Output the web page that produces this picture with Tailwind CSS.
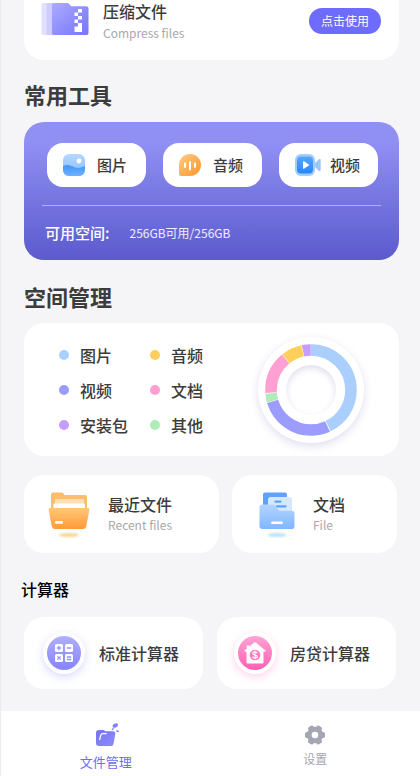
<!DOCTYPE html>
<html lang="zh-CN">

<head>
    <meta charset="UTF-8">
    <meta name="viewport" content="width=device-width, initial-scale=1.0">
    <title>文件管理</title>
    <script src="https://cdn.jsdelivr.net/npm/@tailwindcss/browser@4"></script>
</head>

<body class="bg-[#f5f5f8] font-['Noto_Sans_CJK_SC',sans-serif] text-[#3c3c3c] min-h-screen flex flex-col border-l border-[#ececef]">
    <main class="flex-1 pl-[23px] pr-[21px] pb-[22px]">
        <!-- 压缩文件 -->
        <section class="bg-white rounded-b-[20px] flex items-start pl-[17px] pr-[18px] pb-4">
            <svg class="mt-[2px] w-12 h-[34px]" viewBox="0 0 48 34" fill="none">
                <defs>
                    <linearGradient id="zip" x1="0" y1="0" x2="1" y2="1">
                        <stop stop-color="#abaaff" />
                        <stop offset="1" stop-color="#7675fa" />
                    </linearGradient>
                </defs>
                <path d="M2 1h13v32H2a1.500 1.500 0 0 1-1.500-1.500v-29A1.500 1.500 0 0 1 2 1z" fill="#e2e0ff" />
                <path d="M7 1h14v32H7a1.500 1.500 0 0 1-1.500-1.500v-29A1.500 1.500 0 0 1 7 1z" fill="#cfccff" />
                <path d="M13 1h13c1 0 1.600.3 2.200 1l2 2.300H45a2.500 2.500 0 0 1 2.500 2.500V31a2 2 0 0 1-2 2H13a2 2 0 0 1-2-2V3a2 2 0 0 1 2-2z" fill="url(#zip)" />
                <path d="M37 7h4v3.500h-4zM33.500 10.500H37V14h-3.500zM37 14h4v3.500h-4zM33.500 17.500H37V21h-3.500zM37 21h4v9h-7.500v-5.500H37z" fill="#fff" />
            </svg>
            <div class="ml-[14px] flex-1">
                <h3 class="text-base leading-[22px] font-medium">压缩文件</h3>
                <p class="text-xs leading-[22px] text-[#a8a8a8]">Compress files</p>
            </div>
            <button class="mt-2 h-[26px] px-3 rounded-full bg-[#6d6cff] text-white text-xs">点击使用</button>
        </section>

        <!-- 常用工具 -->
        <h2 class="mt-5 mb-[14px] text-[22px] leading-7 font-bold">常用工具</h2>
        <section class="rounded-[20px] bg-linear-to-b from-[#908ff4] from-15% to-[#5c5acd] px-[18px] pt-[21px]">
            <div class="flex justify-between pl-[5px] pr-[3px]">
                <button class="w-[99px] h-11 rounded-2xl bg-white flex items-center pl-4 gap-3">
                    <svg class="w-[22px] h-[22px]" viewBox="0 0 22 22">
                        <defs>
                            <linearGradient id="sky" x1="0" y1="0" x2="0" y2="1">
                                <stop stop-color="#b5d8ff" />
                                <stop offset="1" stop-color="#84bcff" />
                            </linearGradient>
                            <linearGradient id="sea" x1="0" y1="0" x2="0" y2="1">
                                <stop stop-color="#3f95ff" />
                                <stop offset="1" stop-color="#70b2ff" />
                            </linearGradient>
                        </defs>
                        <rect width="22" height="22" rx="6" fill="url(#sky)" />
                        <path d="M0 12c4-2 7-1 10 .5s7 2 12-.5v4a6 6 0 0 1-6 6H6a6 6 0 0 1-6-6z" fill="url(#sea)" />
                        <circle cx="16" cy="7" r="2.400" fill="#fff" />
                    </svg>
                    <span class="text-[15px] font-medium">图片</span>
                </button>
                <button class="w-[99px] h-11 rounded-2xl bg-white flex items-center pl-4 gap-3">
                    <svg class="w-[22px] h-[22px]" viewBox="0 0 22 22">
                        <defs>
                            <linearGradient id="aud" x1="0" y1="0" x2="1" y2="1">
                                <stop stop-color="#ffcb86" />
                                <stop offset="1" stop-color="#ff9527" />
                            </linearGradient>
                        </defs>
                        <path d="M11 0a11 11 0 0 1 0 22H2a2 2 0 0 1-2-2v-9A11 11 0 0 1 11 0z" fill="url(#aud)" />
                        <path d="M6 9.500v3.500M11 8v7.500M16 9.500v3.500" stroke="#fff" stroke-width="2" stroke-linecap="round" />
                    </svg>
                    <span class="text-[15px] font-medium">音频</span>
                </button>
                <button class="w-[99px] h-11 rounded-2xl bg-white flex items-center pl-4 gap-[9px]">
                    <svg class="w-[26px] h-[22px]" viewBox="0 0 26 22">
                        <defs>
                            <linearGradient id="cam" x1="0" y1="0" x2="0" y2="1">
                                <stop stop-color="#58a7ff" />
                                <stop offset="1" stop-color="#2685ff" />
                            </linearGradient>
                        </defs>
                        <path d="M20 9l3.700-3.500c.8-.8 2-.4 2 .6v10c0 1-1.200 1.400-2 .6L20 13z" fill="#98c8ff" />
                        <rect width="20" height="22" rx="6" fill="#a2ceff" />
                        <rect x="2" y="2.500" width="16" height="17" rx="4" fill="url(#cam)" />
                        <path d="M8 7.800c0-.6.5-.8 1-.5l4.800 3.100c.5.300.5.900 0 1.200L9 14.700c-.5.300-1 .1-1-.5z" fill="#fff" />
                    </svg>
                    <span class="text-[15px] font-medium">视频</span>
                </button>
            </div>
            <div class="mt-[18px] border-t border-white/45 h-[55px] flex items-center pl-[3px] gap-5 text-white">
                <span class="text-[15px] font-medium">可用空间:</span>
                <span class="text-xs text-white/90">256GB可用/256GB</span>
            </div>
        </section>

        <!-- 空间管理 -->
        <h2 class="mt-[22px] mb-[13px] text-[22px] leading-7 font-bold">空间管理</h2>
        <section class="bg-white rounded-[20px] pt-[14px] pb-[13px] px-[35px] flex items-center justify-between">
            <ul class="grid grid-cols-[91px_auto] auto-rows-[35px] items-center text-base font-medium">
                <li class="flex items-center gap-[11px]"><i class="size-[10px] rounded-full bg-[#a9d1ff]"></i>图片</li>
                <li class="flex items-center gap-[11px]"><i class="size-[10px] rounded-full bg-[#ffcf5c]"></i>音频</li>
                <li class="flex items-center gap-[11px]"><i class="size-[10px] rounded-full bg-[#9c9cff]"></i>视频</li>
                <li class="flex items-center gap-[11px]"><i class="size-[10px] rounded-full bg-[#ff9fd2]"></i>文档</li>
                <li class="flex items-center gap-[11px]"><i class="size-[10px] rounded-full bg-[#c59cff]"></i>安装包</li>
                <li class="flex items-center gap-[11px]"><i class="size-[10px] rounded-full bg-[#aeecb9]"></i>其他</li>
            </ul>
            <div class="relative size-[106px] rounded-full bg-white shadow-[0_3px_8px_rgba(90,90,170,0.2)] grid place-items-center">
                <svg class="size-[92px]" viewBox="0 0 92 92">
                    <g fill="none" stroke-width="11.600" transform="rotate(-90 46 46)">
                        <circle cx="46" cy="46" r="40" stroke="#abcffc" pathLength="100" stroke-dasharray="42.900 57.100" />
                        <circle cx="46" cy="46" r="40" stroke="#9c9cff" pathLength="100" stroke-dasharray="27.200 72.800" stroke-dashoffset="-43.200" />
                        <circle cx="46" cy="46" r="40" stroke="#aeecb9" pathLength="100" stroke-dasharray="3.100 96.900" stroke-dashoffset="-70.600" />
                        <circle cx="46" cy="46" r="40" stroke="#ff9fd2" pathLength="100" stroke-dasharray="15.200 84.800" stroke-dashoffset="-73.900" />
                        <circle cx="46" cy="46" r="40" stroke="#ffcf5c" pathLength="100" stroke-dasharray="7.300 92.700" stroke-dashoffset="-89.300" />
                        <circle cx="46" cy="46" r="40" stroke="#c59cff" pathLength="100" stroke-dasharray="3.100 96.900" stroke-dashoffset="-96.800" />
                    </g>
                </svg>
                <div class="absolute inset-7 rounded-full shadow-[inset_0_3px_6px_rgba(90,90,170,0.2)]"></div>
            </div>
        </section>

        <section class="mt-[19px] grid grid-cols-[195fr_165fr] gap-[13px] pr-[2px]">
            <a href="#" class="h-[78px] bg-white rounded-[20px] flex items-center pl-6">
                <svg class="w-[42px] h-12" viewBox="0 0 42 48">
                    <defs>
                        <linearGradient id="fold" x1="0" y1="0" x2="0" y2="1">
                            <stop stop-color="#ffc878" />
                            <stop offset="1" stop-color="#ff9a35" />
                        </linearGradient>
                        <filter id="soft" x="-30%" y="-80%" width="160%" height="260%">
                            <feGaussianBlur stdDeviation="1" />
                        </filter>
                    </defs>
                    <ellipse cx="21" cy="45" rx="10" ry="2" fill="#ffd58c" filter="url(#soft)" />
                    <path d="M5 2.500h8.500c1 0 1.600.4 2 1.100L16.500 5H37a2 2 0 0 1 2 2v14H3V4.500a2 2 0 0 1 2-2z" fill="#ffbd6c" />
                    <rect x="7" y="9" width="29" height="10" rx="1" fill="#ffdfb4" />
                    <rect x="5.500" y="13.500" width="31.500" height="8" rx="1" fill="#fff" />
                    <path d="M2 18h38c1 0 1.600.8 1.400 1.700L38.300 36c-.4 2-1.600 3-3.300 3H7c-1.700 0-2.900-1-3.300-3L.6 19.700C.4 18.800 1 18 2 18z" fill="url(#fold)" />
                    <rect x="7" y="31" width="8" height="2.800" rx="1.200" fill="#fff" />
                </svg>
                <div class="ml-[18px]">
                    <h3 class="text-base leading-[22px] font-medium">最近文件</h3>
                    <p class="text-xs leading-5 text-[#a8a8a8]">Recent files</p>
                </div>
            </a>
            <a href="#" class="h-[78px] bg-white rounded-[20px] flex items-center pl-[27px]">
                <svg class="w-9 h-12" viewBox="0 0 36 48">
                    <defs>
                        <linearGradient id="doc" x1="0" y1="0" x2="0" y2="1">
                            <stop stop-color="#b3d4ff" />
                            <stop offset="1" stop-color="#80b7ff" />
                        </linearGradient>
                    </defs>
                    <ellipse cx="18" cy="45" rx="9.500" ry="2" fill="#bfe0ff" filter="url(#soft)" />
                    <path d="M6 2.500h20a2 2 0 0 1 2 2V19H4V4.500a2 2 0 0 1 2-2z" fill="#5fa2fb" />
                    <rect x="9" y="7" width="24" height="22" rx="2.500" fill="#d6e8ff" />
                    <path d="M16.500 11.700h5M18 16.400h8.500" stroke="#5fa2fb" stroke-width="2.200" stroke-linecap="round" />
                    <path d="M3 14.500h11c1.300 0 2 .5 2.700 1.500l2 3c.8 1.200 1.600 1.700 3 1.700H33a2.500 2.500 0 0 1 2.500 2.500v13A3 3 0 0 1 32.500 39h-29a3 3 0 0 1-3-3V17A2.500 2.500 0 0 1 3 14.500z" fill="url(#doc)" />
                    <rect x="12" y="31.500" width="12" height="2.500" rx="1.200" fill="#fff" />
                </svg>
                <div class="ml-[18px]">
                    <h3 class="text-base leading-[22px] font-medium">文档</h3>
                    <p class="text-xs leading-5 text-[#a8a8a8]">File</p>
                </div>
            </a>
        </section>

        <!-- 计算器 -->
        <h2 class="-ml-[3px] mt-6 mb-4 text-base leading-6 font-medium text-black">计算器</h2>
        <section class="grid grid-cols-2 gap-[14px] pr-[3px]">
            <a href="#" class="h-[72px] bg-white rounded-[20px] flex items-center pl-[19px] gap-[14px]">
                <span class="size-[42px] rounded-full bg-white shadow-[0_3px_8px_rgba(120,120,255,0.28)] grid place-items-center">
                    <svg class="size-[34px]" viewBox="0 0 34 34">
                        <defs>
                            <linearGradient id="calc" x1="0" y1="0" x2="0" y2="1">
                                <stop stop-color="#b0afff" />
                                <stop offset="1" stop-color="#8483ff" />
                            </linearGradient>
                        </defs>
                        <circle cx="17" cy="17" r="17" fill="url(#calc)" />
                        <g fill="#fff">
                            <rect x="8" y="8" width="8" height="8" rx="1.500" />
                            <rect x="18" y="8" width="8" height="8" rx="1.500" />
                            <rect x="8" y="18" width="8" height="8" rx="1.500" />
                            <rect x="18" y="18" width="8" height="8" rx="1.500" />
                        </g>
                        <path d="M12 9.800v4.400M9.800 12h4.400M19.800 12h4.400M10.400 20.400l3.200 3.200M13.600 20.400l-3.200 3.200M19.800 21h4.400M19.800 23.500h4.400" stroke="#9392ff" stroke-width="1.300" />
                    </svg>
                </span>
                <span class="text-base font-medium">标准计算器</span>
            </a>
            <a href="#" class="h-[72px] bg-white rounded-[20px] flex items-center pl-[17px] gap-[14px]">
                <span class="size-[42px] rounded-full bg-white shadow-[0_3px_8px_rgba(255,100,180,0.28)] grid place-items-center">
                    <svg class="size-[34px]" viewBox="0 0 34 34">
                        <defs>
                            <linearGradient id="loan" x1="0" y1="0" x2="0" y2="1">
                                <stop stop-color="#ffa3d3" />
                                <stop offset="1" stop-color="#ff5fb3" />
                            </linearGradient>
                        </defs>
                        <circle cx="17" cy="17" r="17" fill="url(#loan)" />
                        <path d="M8.800 9.500h2.700v3.300l-2.700 2.300zM16.300 6.500c.4-.4 1-.4 1.400 0l9.800 8c.5.400.3 1-.4 1H25.500V26.500a1 1 0 0 1-1 1h-15a1 1 0 0 1-1-1V15.500H6.900c-.7 0-.9-.6-.4-1z" fill="#fff" />
                        <circle cx="17" cy="19" r="5.300" fill="#ff7cc0" />
                        <path d="M19.200 17.300c-.2-1-1-1.500-2.200-1.500-1.300 0-2.200.6-2.200 1.600 0 2.200 4.500 1 4.500 3.200 0 1-1 1.600-2.300 1.600s-2.200-.6-2.400-1.600M17 14.700v8.600" fill="none" stroke="#fff" stroke-width="1.100" />
                    </svg>
                </span>
                <span class="text-base font-medium">房贷计算器</span>
            </a>
        </section>
    </main>

    <nav class="bg-white h-[65px] grid grid-cols-2 text-xs">
        <a href="#" class="flex flex-col items-center pt-3 text-[#6d6cf5]">
            <svg class="w-[26px] h-6" viewBox="0 0 26 24">
                <defs>
                    <linearGradient id="tab" x1="0" y1="0" x2="1" y2="1">
                        <stop stop-color="#7473ea" />
                        <stop offset="1" stop-color="#8e8dff" />
                    </linearGradient>
                </defs>
                <path d="M6 7h4.500l2 1.200H20c1.700 0 2.600 1 2.300 2.600l-1.700 9.600c-.3 1.700-1.200 2.600-2.900 2.600H6a3 3 0 0 1-3-3V10A3 3 0 0 1 6 7z" fill="url(#tab)" />
                <path d="M6.700 16.500l1.100-4.300c.3-1 .9-1.500 1.900-1.500h3.500" fill="none" stroke="#fff" stroke-width="1.300" stroke-linecap="round" />
                <ellipse cx="22.300" cy="2.500" rx="2.900" ry="1.900" fill="#8180ff" transform="rotate(-30 22.300 2.500)" />
                <ellipse cx="19.800" cy="6" rx="1.200" ry=".8" fill="#8180ff" transform="rotate(-50 19.800 6)" />
                <ellipse cx="24.500" cy="8.200" rx="1.500" ry=".9" fill="#8180ff" transform="rotate(20 24.500 8.200)" />
            </svg>
            <span class="mt-[5px] text-[13px] leading-5">文件管理</span>
        </a>
        <a href="#" class="flex flex-col items-center pt-[14px] text-[#a5a5b4]">
            <svg class="w-[22px] h-5" viewBox="0 0 22 20">
                <g fill="#a5a5b4">
                    <circle cx="11" cy="10" r="8.200" />
                    <rect x="1" y="7" width="20" height="6" rx="1.800" />
                    <rect x="1" y="7" width="20" height="6" rx="1.800" transform="rotate(60 11 10)" />
                    <rect x="1" y="7" width="20" height="6" rx="1.800" transform="rotate(120 11 10)" />
                </g>
                <circle cx="11" cy="10" r="3.300" fill="#fff" />
            </svg>
            <span class="mt-1 leading-5">设置</span>
        </a>
    </nav>
</body>

</html>
